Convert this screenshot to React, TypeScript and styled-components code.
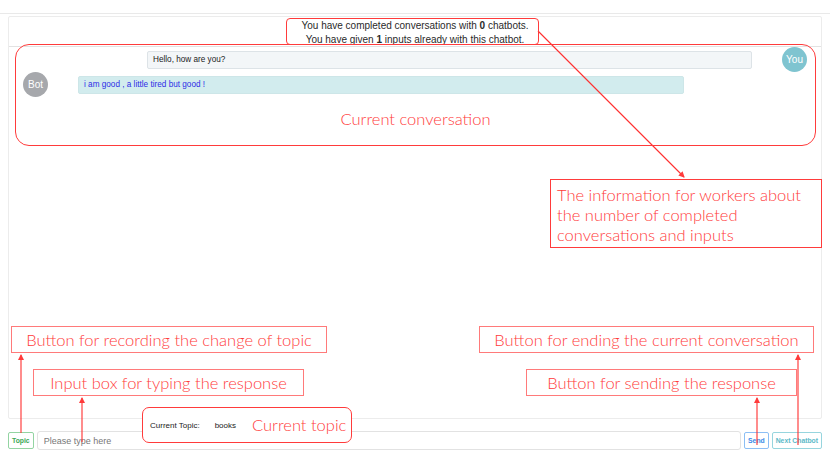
import React from 'react';
import styled, { createGlobalStyle, css } from 'styled-components';

const GlobalStyle = createGlobalStyle`
    html, body {
        margin: 0;
        padding: 0;
        background: #ffffff;
    }
    * {
        box-sizing: border-box;
    }
`;

const RED = '#ff3b3b';

// chat page
const Page = styled.div`
    position: relative;
    width: 830px;
    height: 467px;
    overflow: hidden;
    font-family: 'Liberation Sans', Arial, sans-serif;
    color: #222;
`;

const TopStrip = styled.div`
    height: 14px;
    border-bottom: 1px solid #e9e9e9;
`;

const Main = styled.div`
    padding: 2px 8px 0 8px;
`;

const Card = styled.div`
    height: 403px;
    border: 1px solid #ececec;
    border-radius: 2px;
    display: flex;
    flex-direction: column;
`;

const CardHeader = styled.div`
    height: 30px;
    border-bottom: 1px solid #e2e2e2;
    padding-top: 1.5px;
    text-align: center;
    font-size: 10px;
    line-height: 14.5px;
    color: #2a2a2a;

    b {
        font-weight: bold;
    }
`;

const Messages = styled.div`
    display: flex;
    flex-direction: column;
    padding: 0 14px;
`;

const MessageRow = styled.div<{ $side: 'user' | 'bot' }>`
    display: flex;
    align-items: center;
    gap: 30px;
    height: 25px;
    justify-content: ${({ $side }) => ($side === 'user' ? 'flex-end' : 'flex-start')};
`;

const Avatar = styled.div<{ $tone: 'user' | 'bot' }>`
    width: 25px;
    height: 25px;
    border-radius: 50%;
    flex: 0 0 25px;
    display: flex;
    align-items: center;
    justify-content: center;
    color: #fff;
    font-size: 10px;
    background: ${({ $tone }) => ($tone === 'user' ? '#7fc4d0' : '#a6a8ac')};
`;

const Bubble = styled.div<{ $variant: 'user' | 'bot' }>`
    height: 18px;
    display: flex;
    align-items: center;
    padding: 0 5px;
    border-radius: 2px;
    font-size: 8.2px;
    ${({ $variant }) =>
        $variant === 'user'
            ? css`
                  width: 605px;
                  background: #f3f6f8;
                  border: 1px solid #dde3e7;
                  color: #222;
              `
            : css`
                  width: 606px;
                  background: #d2ecee;
                  border: 1px solid #cde6e8;
                  color: #2d2de6;
              `}
`;

const InputBar = styled.div`
    display: flex;
    align-items: center;
    gap: 3px;
    margin-top: 12px;
    height: 19px;
`;

const toneColors = {
    green: { border: '#93d4a2', text: '#3aa856' },
    blue: { border: '#8cbff5', text: '#3b8be8' },
    teal: { border: '#97d5de', text: '#5cb9c8' },
};

const OutlineButton = styled.button<{ $tone: keyof typeof toneColors }>`
    height: 17px;
    padding: 0 3px;
    background: #fff;
    border-radius: 2px;
    font-family: 'Liberation Sans', Arial, sans-serif;
    font-size: 6.8px;
    font-weight: bold;
    border: 1px solid ${({ $tone }) => toneColors[$tone].border};
    color: ${({ $tone }) => toneColors[$tone].text};
`;

const TextInput = styled.input`
    flex: 1;
    height: 19px;
    border: 1px solid #e2e2e2;
    border-radius: 3px;
    padding: 0 6px;
    font-family: 'Liberation Sans', Arial, sans-serif;
    font-size: 9px;
    outline: none;

    &::placeholder {
        color: #777;
    }
`;

// annotation layer drawn over the screenshot
const Overlay = styled.div`
    position: absolute;
    inset: 0;
    pointer-events: none;
    font-family: Lato, 'Noto Sans', sans-serif;
    font-weight: 300;
    color: ${RED};
`;

const Arrows = styled.svg`
    position: absolute;
    left: 0;
    top: 0;
`;

const NoteBox = styled.div<{ $x: number; $y: number; $w: number; $h: number; $radius?: number; $light?: boolean }>`
    position: absolute;
    left: ${({ $x }) => $x}px;
    top: ${({ $y }) => $y}px;
    width: ${({ $w }) => $w}px;
    height: ${({ $h }) => $h}px;
    border: ${({ $light }) => ($light ? '1.5px solid #ff7a7a' : `1.2px solid ${RED}`)};
    border-radius: ${({ $radius }) => $radius ?? 0}px;
    display: flex;
    align-items: center;
    justify-content: center;
    font-size: 16.5px;
    white-space: nowrap;
`;

const ConversationLabel = styled.div`
    position: absolute;
    left: 0;
    right: 0;
    top: 64px;
    text-align: center;
    font-size: 16.5px;
`;

const InfoBox = styled(NoteBox)`
    justify-content: flex-start;
    align-items: flex-start;
    padding: 5px 0 0 6px;
    line-height: 20px;
    white-space: normal;
`;

const TopicBox = styled(NoteBox)`
    background: #fff;
    justify-content: flex-start;
    padding-left: 7px;
`;

const TopicLabel = styled.span`
    font-family: 'Liberation Sans', Arial, sans-serif;
    font-weight: normal;
    font-size: 8px;
    color: #222;
    margin-right: 15px;
`;

const TopicName = styled.span`
    font-family: 'Liberation Sans', Arial, sans-serif;
    font-weight: normal;
    font-size: 8px;
    color: #222;
    margin-right: 16px;
`;

const App: React.FC = () => {
    return (
        <Page>
            <GlobalStyle />
            <TopStrip />
            <Main>
                <Card>
                    <CardHeader>
                        <div>
                            You have completed conversations with <b>0</b> chatbots.
                        </div>
                        <div>
                            You have given <b>1</b> inputs already with this chatbot.
                        </div>
                    </CardHeader>
                    <Messages>
                        <MessageRow $side="user">
                            <Bubble $variant="user">Hello, how are you?</Bubble>
                            <Avatar $tone="user">You</Avatar>
                        </MessageRow>
                        <MessageRow $side="bot">
                            <Avatar $tone="bot">Bot</Avatar>
                            <Bubble $variant="bot">i am good , a little tired but good !</Bubble>
                        </MessageRow>
                    </Messages>
                </Card>
                <InputBar>
                    <OutlineButton $tone="green">Topic</OutlineButton>
                    <TextInput placeholder="Please type here" />
                    <OutlineButton $tone="blue">Send</OutlineButton>
                    <OutlineButton $tone="teal">Next Chatbot</OutlineButton>
                </InputBar>
            </Main>

            <Overlay>
                <Arrows width="830" height="467" viewBox="0 0 830 467">
                    <defs>
                        <marker id="head" markerUnits="userSpaceOnUse" markerWidth="6" markerHeight="6" refX="5" refY="3" orient="auto">
                            <path d="M0,0 L6,3 L0,6 z" fill={RED} stroke="none" />
                        </marker>
                    </defs>
                    <g stroke="#ff2e2e" strokeWidth="1.1" fill="none">
                        <line x1="538" y1="31" x2="684" y2="177" markerEnd="url(#head)" />
                        <line x1="21" y1="433" x2="21" y2="355" markerEnd="url(#head)" />
                        <line x1="82" y1="442" x2="82" y2="398" markerEnd="url(#head)" />
                        <line x1="757" y1="445" x2="757" y2="398" markerEnd="url(#head)" />
                        <line x1="798" y1="445" x2="798" y2="355" markerEnd="url(#head)" />
                    </g>
                </Arrows>

                <NoteBox $x={286} $y={18} $w={253} $h={27} $radius={4} />
                <NoteBox $x={15} $y={44} $w={801} $h={102} $radius={14}>
                    <ConversationLabel>Current conversation</ConversationLabel>
                </NoteBox>

                <InfoBox $x={550} $y={179} $w={272} $h={69}>
                    The information for workers about the number of completed conversations and inputs
                </InfoBox>

                <NoteBox $x={11} $y={326} $w={316} $h={27} $light>
                    Button for recording the change of topic
                </NoteBox>
                <NoteBox $x={33} $y={369} $w={271} $h={27} $light>
                    Input box for typing the response
                </NoteBox>
                <NoteBox $x={479} $y={326} $w={335} $h={27} $light>
                    Button for ending the current conversation
                </NoteBox>
                <NoteBox $x={526} $y={369} $w={271} $h={27} $light>
                    Button for sending the response
                </NoteBox>

                <TopicBox $x={142} $y={407} $w={210} $h={36} $radius={7}>
                    <TopicLabel>Current Topic:</TopicLabel>
                    <TopicName>books</TopicName>
                    Current topic
                </TopicBox>
            </Overlay>
        </Page>
    );
};

export default App;
